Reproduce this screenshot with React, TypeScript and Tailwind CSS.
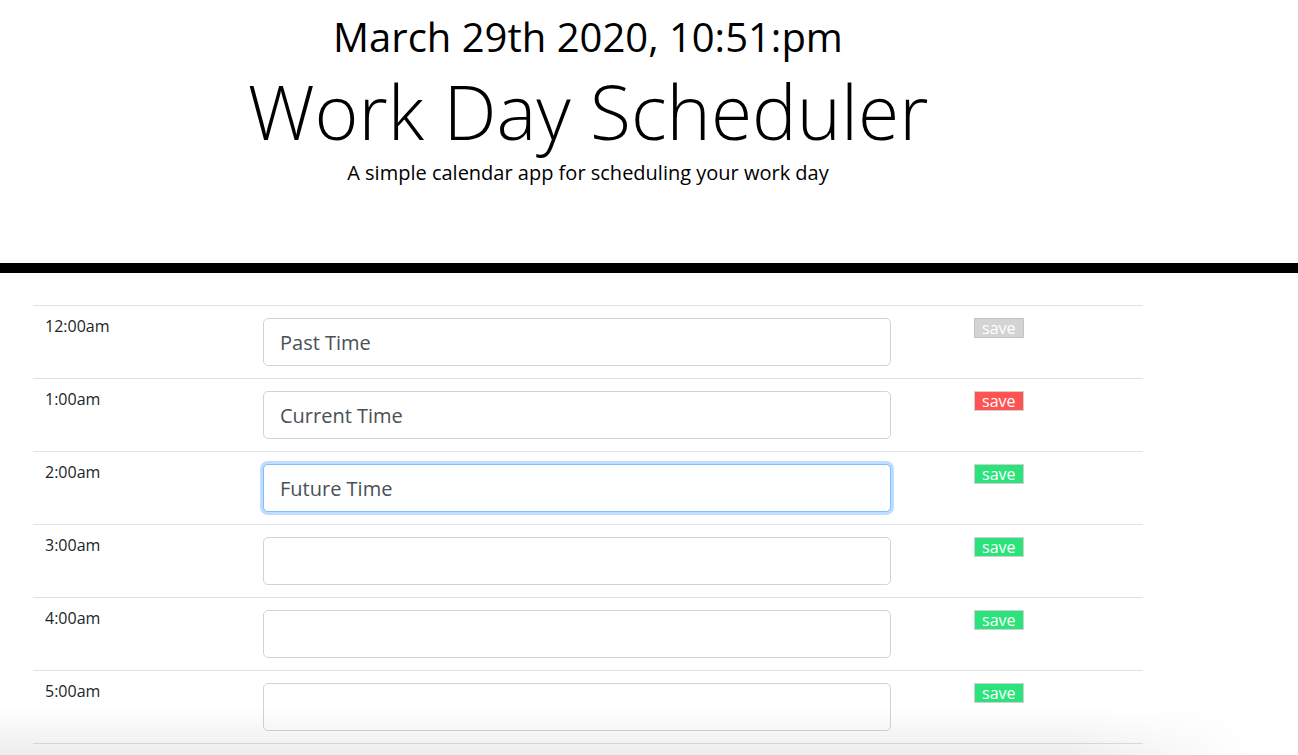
import React, { useState } from 'react';

const hours = [
  '12:00am', '1:00am', '2:00am', '3:00am', '4:00am', '5:00am', '6:00am', '7:00am',
  '8:00am', '9:00am', '10:00am', '11:00am', '12:00pm', '1:00pm', '2:00pm', '3:00pm',
  '4:00pm', '5:00pm', '6:00pm', '7:00pm', '8:00pm', '9:00pm', '10:00pm', '11:00pm'
];

const initialNotes: Record<number, string> = {
  0: 'Past Time',
  1: 'Current Time',
  2: 'Future Time'
};

function saveClass(index: number) {
  if (index === 0) return 'bg-[#d3d3d3] border-[#c4c4c4]';
  if (index === 1) return 'bg-[#ff5252] border-[#d0d0d0]';
  return 'bg-[#2be37a] border-[#d0d0d0]';
}

export default function App() {
  const [notes, setNotes] = useState<Record<number, string>>(initialNotes);

  return (
    <div className="relative h-[755px] overflow-hidden bg-white font-['Open_Sans',sans-serif] text-[#212529]">
      <header className="w-[1176px] pt-[13px] text-center text-black">
        <p className="text-[40px] leading-[48px]">March 29th 2020, 10:51:pm</p>
        <h1 className="mt-[6px] text-[75px] font-[330] leading-[88px]">Work Day Scheduler</h1>
        <p className="mt-[3px] text-[20px] leading-[30px]">A simple calendar app for scheduling your work day</p>
      </header>

      <div className="mt-[75px] h-[10px] w-full bg-black" />

      <div className="w-[1176px] pt-[32px]">
        <div className="mx-[33px] border-t border-[#dee2e6]">
          {hours.map((hour, i) => (
            <div key={hour} className="grid grid-cols-[218px_652px_1fr] border-b border-[#dee2e6]">
              <div className="pl-3 pt-2 text-[16px] leading-6">{hour}</div>
              <div className="p-3">
                <textarea
                  rows={1}
                  value={notes[i] ?? ''}
                  onChange={(e) => setNotes(prev => ({ ...prev, [i]: e.target.value }))}
                  className={
                    i === 2
                      ? 'block h-12 w-full resize-none overflow-hidden rounded-[5px] border border-[#80bdff] bg-white px-4 pb-[7px] pt-[9px] text-[20px] leading-[30px] text-[#495057] shadow-[0_0_0_3px_rgba(0,123,255,0.25)] outline-none'
                      : 'block h-12 w-full resize-none overflow-hidden rounded-[5px] border border-[#ced4da] bg-white px-4 pb-[7px] pt-[9px] text-[20px] leading-[30px] text-[#495057] outline-none'
                  }
                />
              </div>
              <div className="pl-[71px] pt-3">
                <button className={`block border px-[7px] text-[16px] font-medium leading-[18px] text-white ${saveClass(i)}`}>
                  save
                </button>
              </div>
            </div>
          ))}
        </div>
      </div>

      <div className="pointer-events-none absolute bottom-0 left-0 h-[48px] w-[1298px] bg-[linear-gradient(to_bottom,rgba(0,0,0,0),rgba(0,0,0,0.07))] [mask-image:linear-gradient(to_right,black_82%,transparent_97%)]" />
    </div>
  );
}
